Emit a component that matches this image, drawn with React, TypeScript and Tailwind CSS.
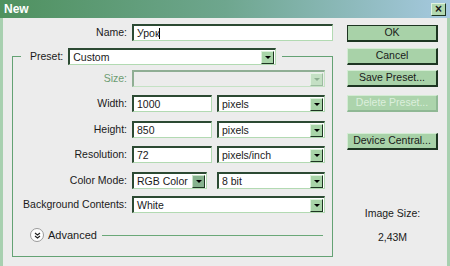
import React from "react";

const field =
  "flex items-center h-[17px] bg-white border-t-2 border-l-2 border-b border-r border-t-[#2c4a33] border-l-[#2c4a33] border-b-[#b2dab2] border-r-[#b2dab2]";

function Arrow({ dark, disabled }: { dark?: boolean; disabled?: boolean }) {
  return (
    <div
      className={`ml-auto mr-[1px] w-[13px] h-[13px] shrink-0 flex items-center justify-center border-t border-l border-b border-r ${
        disabled
          ? "bg-[#c4e0c4] border-t-[#e4f4e4] border-l-[#e4f4e4] border-b-[#9cbca0] border-r-[#9cbca0]"
          : dark
          ? "bg-[#86b28e] border-t-[#c8e4c8] border-l-[#c8e4c8] border-b-[#1d3522] border-r-[#1d3522]"
          : "bg-[#a8d4a8] border-t-[#dcf2dc] border-l-[#dcf2dc] border-b-[#1d3522] border-r-[#1d3522]"
      }`}
    >
      <div
        className={`w-0 h-0 border-l-[3px] border-r-[3px] border-t-[3px] border-l-transparent border-r-transparent ${
          disabled ? "border-t-[#8cae90]" : "border-t-black"
        }`}
      />
    </div>
  );
}

function Select({ value, width, dark }: { value: string; width: string; dark?: boolean }) {
  return (
    <div className={`${field} ${width}`}>
      <span className="pl-[3px] leading-none whitespace-nowrap">{value}</span>
      <Arrow dark={dark} />
    </div>
  );
}

function Input({ value, width, caret }: { value: string; width: string; caret?: boolean }) {
  return (
    <div className={`${field} ${width}`}>
      <span className="pl-[3px] leading-none">{value}</span>
      {caret && <span className="w-px h-[11px] bg-black" />}
    </div>
  );
}

function Row({ label, children, muted }: { label: string; children: React.ReactNode; muted?: boolean }) {
  return (
    <div className="flex items-center h-[17px]">
      <span className={`w-[115px] text-right pr-px whitespace-nowrap ${muted ? "text-[#6c9c72]" : ""}`}>{label}</span>
      <div className="ml-[4px] flex gap-[5px]">{children}</div>
    </div>
  );
}

function Btn({ label, primary, disabled }: { label: string; primary?: boolean; disabled?: boolean }) {
  return (
    <div
      className={`w-[91px] h-[17px] flex items-center justify-center border-t border-l border-b-2 border-r-2 ${
        disabled
          ? "bg-[#acd4ac] text-[#dcefdc] border-t-[#d4ecd4] border-l-[#d4ecd4] border-b-[#8fb894] border-r-[#8fb894]"
          : primary
          ? "bg-[#a8d2a8] border-t-[#1d3522] border-l-[#1d3522] border-b-[#1d3522] border-r-[#1d3522]"
          : "bg-[#a8d2a8] border-t-[#d4ecd4] border-l-[#d4ecd4] border-b-[#1d3522] border-r-[#1d3522]"
      }`}
    >
      {label}
    </div>
  );
}

export default function App() {
  return (
    <div
      className="w-[450px] h-[266px] flex flex-col overflow-hidden bg-[#ececec] text-[10.5px] text-[#1a1a1a]"
      style={{ fontFamily: '"Liberation Sans", Arial, sans-serif' }}
    >
      {/* Title bar */}
      <div className="h-[18px] flex items-center px-[4px] bg-gradient-to-r from-[#4f915f] via-[#6ea68e] to-[#a6c9e0]">
        <span className="font-bold text-white text-[12px]">New</span>
        <div className="ml-auto w-[15px] h-[13px] flex items-center justify-center bg-[#b2d8b0] border-t border-l border-b border-r border-t-[#e0f2e0] border-l-[#e0f2e0] border-b-[#1d3522] border-r-[#1d3522] text-[12px] font-bold leading-none">
          ×
        </div>
      </div>

      <div className="flex flex-1 border-l-[3px] border-r-[3px] border-l-[#a8d0b0] border-r-[#a8d0b0]">
        {/* Left column */}
        <div className="w-[341px] flex flex-col">
          <div className="mt-[6px] flex items-center h-[17px]">
            <span className="w-[125px] text-right pr-px">Name:</span>
            <div className="ml-[4px]">
              <Input value="Урок" width="w-[201px]" caret />
            </div>
          </div>

          <fieldset className="ml-[9px] mt-[7px] w-[321px] h-[209px] border border-[#64a274]">
            <legend className="ml-[8px] pl-[9px] pr-[6px]">
              <div className="flex items-center gap-[5px]">
                <span>Preset:</span>
                <Select value="Custom" width="w-[208px]" />
              </div>
            </legend>

            <div className="flex flex-col mt-[5px]">
              <Row label="Size:" muted>
                <div className="flex items-center h-[17px] w-[193px] bg-[#ececec] border-t-2 border-l-2 border-b border-r border-t-[#8fae94] border-l-[#8fae94] border-b-[#c4e2c4] border-r-[#c4e2c4]">
                  <Arrow disabled />
                </div>
              </Row>
              <div className="mt-[8px]">
                <Row label="Width:">
                  <Input value="1000" width="w-[80px]" />
                  <Select value="pixels" width="w-[108px]" />
                </Row>
              </div>
              <div className="mt-[9px]">
                <Row label="Height:">
                  <Input value="850" width="w-[80px]" />
                  <Select value="pixels" width="w-[108px]" />
                </Row>
              </div>
              <div className="mt-[8px]">
                <Row label="Resolution:">
                  <Input value="72" width="w-[80px]" />
                  <Select value="pixels/inch" width="w-[108px]" />
                </Row>
              </div>
              <div className="mt-[9px]">
                <Row label="Color Mode:">
                  <Select value="RGB Color" width="w-[75px]" dark />
                  <div className="ml-[5px]">
                    <Select value="8 bit" width="w-[108px]" />
                  </div>
                </Row>
              </div>
              <div className="mt-[7px]">
                <Row label="Background Contents:">
                  <Select value="White" width="w-[193px]" />
                </Row>
              </div>

              <div className="mt-[15px] ml-[17px] flex items-center h-[14px]">
                <div className="w-[14px] h-[14px] rounded-full bg-white border border-[#9a9a9a] flex items-center justify-center">
                  <svg width="7" height="7" viewBox="0 0 7 7">
                    <path d="M1 1 L3.5 3 L6 1 M1 4 L3.5 6 L6 4" stroke="#222" strokeWidth="1.2" fill="none" />
                  </svg>
                </div>
                <span className="ml-[4px] text-[11px]">Advanced</span>
                <div className="ml-[5px] w-[221px] h-px bg-[#6aa878]" />
              </div>
            </div>
          </fieldset>
        </div>

        {/* Right column */}
        <div className="flex-1 flex flex-col pl-[3px] pt-[7px]">
          <Btn label="OK" primary />
          <div className="mt-[6px]">
            <Btn label="Cancel" />
          </div>
          <div className="mt-[5px]">
            <Btn label="Save Preset..." />
          </div>
          <div className="mt-[8px]">
            <Btn label="Delete Preset..." disabled />
          </div>
          <div className="mt-[21px]">
            <Btn label="Device Central..." />
          </div>
          <div className="w-[91px] mt-[56px] flex flex-col items-center">
            <span>Image Size:</span>
            <span className="mt-[8px]">2,43M</span>
          </div>
        </div>
      </div>
    </div>
  );
}
